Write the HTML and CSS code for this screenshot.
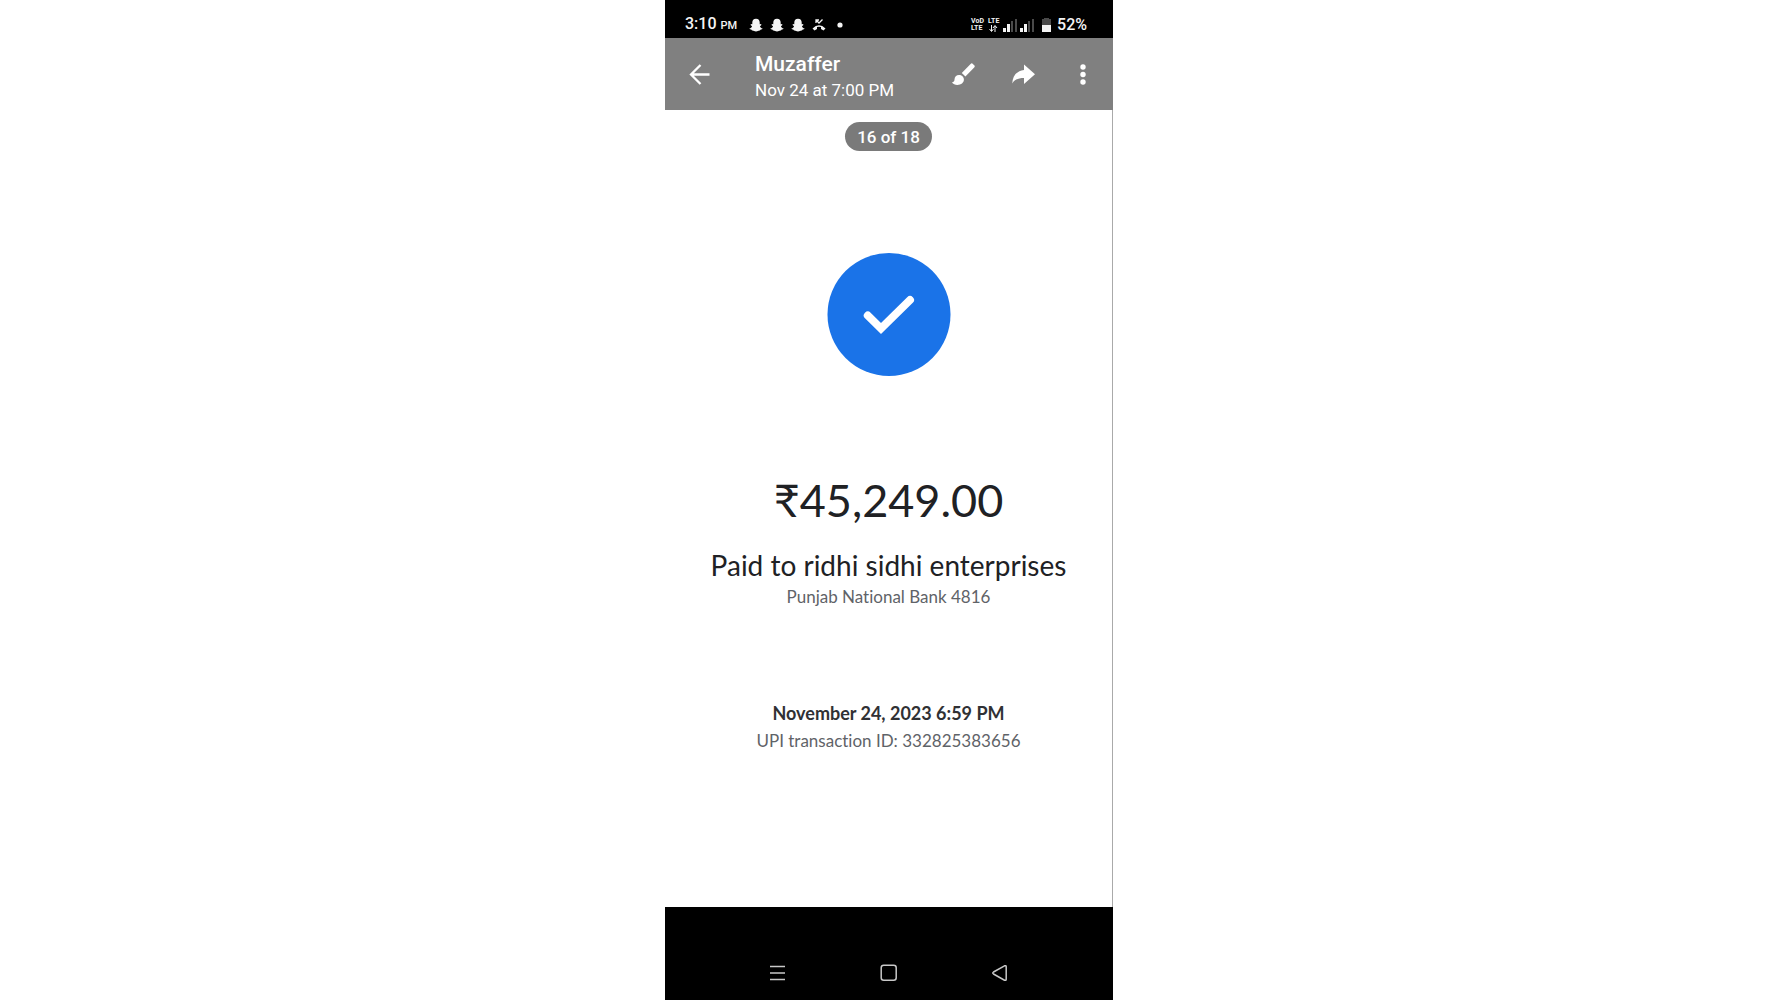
FILE: index.html
```html
<!DOCTYPE html>
<html lang="en">
<head>
<meta charset="utf-8">
<meta name="viewport" content="width=device-width, initial-scale=1">
<title>Muzaffer</title>
<link rel="stylesheet" href="styles.css">
</head>
<body>
<svg class="defs" aria-hidden="true">
  <symbol id="ghost" viewBox="0 0 14 14">
    <path d="M7 .8c2.500 0 3.700 1.600 3.700 3.800v1.600l1.600-.1-.1 1.200-1.300.9c.5 1.200 1.300 1.900 2.700 2.300-.2.900-1.100 1-2.200 1.200l-.4.900c-1.600-.3-2.200.9-4 .9s-2.400-1.200-4-.9l-.4-.9c-1.100-.2-2-.3-2.200-1.200 1.400-.4 2.200-1.100 2.700-2.300l-1.300-.9-.1-1.200 1.600.1V4.600C3.300 2.400 4.500.8 7 .8z"/>
  </symbol>
  <symbol id="signal" viewBox="0 0 14 14">
    <path d="M0 10h3v4H0zM4 6h3v8H4z"/>
    <path d="M8 3h2v11H8zM12 1h2v13h-2z" opacity=".3"/>
  </symbol>
</svg>
<main class="phone">
  <div class="status">
    <div class="status-left">
      <span class="clock">3:10 <small>PM</small></span>
      <span class="notices">
        <svg class="i14"><use href="#ghost"/></svg>
        <svg class="i14"><use href="#ghost"/></svg>
        <svg class="i14"><use href="#ghost"/></svg>
        <svg class="i14" viewBox="0 0 14 14"><path d="M.5 10.500Q7 4 13.500 10.500L11.500 12.500 9 11V9Q7 8.300 5 9v2l-2.500 1.500z"/><path d="M4 5V2h3M4 2l3 3 3.500-3.500" fill="none" stroke="currentColor" stroke-width="1.300"/></svg>
        <svg class="i14" viewBox="0 0 14 14"><circle cx="7" cy="7" r="2.600"/></svg>
      </span>
    </div>
    <div class="status-right">
      <span class="volte"><span>VoD</span><span>LTE</span></span>
      <span class="lte"><span>LTE</span><svg viewBox="0 0 10 7"><path d="M3.500 0v6M1.500 4l2 2.500 2-2.500M7 7V1M5 3l2-2.500L9 3" fill="none" stroke="currentColor"/></svg></span>
      <svg class="i14"><use href="#signal"/></svg>
      <svg class="i14"><use href="#signal"/></svg>
      <svg class="battery" viewBox="0 0 9 14"><path d="M2 0h5v1h2v6H0V1h2z" opacity=".3"/><path d="M0 7h9v7H0z"/></svg>
      <span>52%</span>
    </div>
  </div>

  <header class="bar">
    <button class="icon" type="button" aria-label="Back"><svg viewBox="0 0 24 24"><path d="M21.500 12.500H3.500M12.500 3l-9.500 9.500 9.500 9.500" fill="none" stroke="currentColor" stroke-width="2.300"/></svg></button>
    <div class="who">
      <h1>Muzaffer</h1>
      <p>Nov 24 at 7:00 PM</p>
    </div>
    <div class="actions">
      <button class="icon" type="button" aria-label="Draw"><svg viewBox="0 0 24 24"><path d="M8 13c-2.600 0-4.500 1.900-4.500 4.500 0 1.800-1 2.600-2.500 3 1.200 1.500 3 2.400 5.300 2.400 3.800 0 6.600-2.200 6.600-5.400C12.900 14.900 10.700 13 8 13zM23.200 3.200l-1.300-1.300a1.600 1.600 0 0 0-2.300 0L10.800 11.100l3.600 3.500 8.800-9.100a1.600 1.600 0 0 0 0-2.300z"/></svg></button>
      <button class="icon" type="button" aria-label="Share"><svg viewBox="0 0 24 24"><path d="M13 8V2.500l11 9.800L13 22v-6C7.200 16 3.500 17.500 1.300 21.500 1.500 14.500 5 9.200 13 8z"/></svg></button>
      <button class="icon" type="button" aria-label="More options"><svg viewBox="0 0 24 24"><circle cx="12" cy="5" r="2.700"/><circle cx="12" cy="12.500" r="2.700"/><circle cx="12" cy="20" r="2.700"/></svg></button>
    </div>
  </header>

  <section class="receipt">
    <span class="count">16 of 18</span>
    <svg class="done" viewBox="0 0 124 124" role="img" aria-label="Payment complete"><circle cx="62" cy="61.500" r="61.500"/><path d="M40.800 62.500L54 75.500l29-28.500" fill="none" stroke="#fff" stroke-width="8" stroke-linecap="round"/></svg>
    <p class="amount">₹45,249.00</p>
    <h2 class="payee">Paid to ridhi sidhi enterprises</h2>
    <p class="detail">Punjab National Bank 4816</p>
    <p class="date">November 24, 2023 6:59 PM</p>
    <p class="detail">UPI transaction ID: 332825383656</p>
  </section>

  <nav class="keys">
    <button class="key" type="button" aria-label="Recent apps"><svg viewBox="0 0 18 18"><path d="M1 2.500h15M1 9h15M1 15.500h15"/></svg></button>
    <button class="key" type="button" aria-label="Home"><svg viewBox="0 0 18 18"><rect x="1.200" y="1.200" width="15" height="15" rx="2.500"/></svg></button>
    <button class="key" type="button" aria-label="Back"><svg viewBox="0 0 18 18"><path d="M13.500 1.800L2.500 8q-1.500 1 0 2l11 6.200q1.700.6 1.700-1V2.800q0-1.600-1.700-1z"/></svg></button>
  </nav>
</main>
</body>
</html>
```
FILE: styles.css
```css
* {
  box-sizing: border-box;
}

body {
  margin: 0;
  background: #fff;
  font-family: Roboto, "Liberation Sans", sans-serif;
}

h1, h2, p {
  margin: 0;
}

svg {
  display: block;
  fill: currentColor;
}

button {
  padding: 0;
  border: 0;
  background: none;
  color: inherit;
}

.defs {
  display: none;
}

.phone {
  display: flex;
  flex-direction: column;
  max-width: 448px;
  min-height: 100vh;
  margin: 0 auto;
}

.status {
  display: flex;
  justify-content: space-between;
  padding: 12px 26px 0 20px;
  height: 38px;
  background: #000;
  color: #f4f4f4;
  font-size: 16px;
  line-height: 28px;
}

.status-left,
.status-right,
.notices {
  display: flex;
  align-items: center;
}

.status-left {
  gap: 12px;
}

.status-right {
  gap: 3px;
}

.clock,
.status-right {
  font-weight: 500;
}

.clock small {
  font-size: 11px;
}

.notices {
  gap: 7px;
}

.i14 {
  width: 14px;
  height: 14px;
}

.volte,
.lte {
  display: flex;
  flex-direction: column;
  width: 14px;
  font-size: 7px;
  font-weight: 700;
  line-height: 7px;
}

.lte {
  width: 12px;
}

.lte svg {
  width: 10px;
  height: 7px;
}

.battery {
  width: 9px;
  height: 14px;
  margin: 0 3px 0 5px;
}

.bar {
  display: flex;
  align-items: center;
  height: 72px;
  padding: 0 18px 0 23px;
  background: #808080;
  color: #fff;
}

.icon svg {
  width: 24px;
  height: 24px;
}

.who {
  flex: 1;
  margin-left: 43px;
  padding-top: 6px;
}

.who h1 {
  font-size: 21px;
  font-weight: 500;
  line-height: 26px;
}

.who p {
  font-size: 17px;
  line-height: 26px;
}

.actions {
  display: flex;
  gap: 36px;
}

.receipt {
  display: flex;
  flex: 1;
  flex-direction: column;
  align-items: center;
  padding: 12px 0;
  border-right: 1px solid #aaa;
  color: #202124;
  font-family: Lato, "Noto Sans", sans-serif;
  font-variant-ligatures: none;
  text-align: center;
}

.count {
  padding: 1px 12px 0;
  border-radius: 16px;
  background: #7a7a7a;
  color: #fff;
  font-family: Roboto, sans-serif;
  font-size: 17px;
  font-weight: 500;
  line-height: 28px;
}

.done {
  width: 124px;
  height: 124px;
  margin: 102px 0 96px;
  color: #1a73e8;
}

.amount {
  font-size: 45px;
  line-height: 54px;
}

.payee {
  margin-top: 20px;
  font-size: 28px;
  font-weight: 400;
  line-height: 36px;
}

.detail {
  color: #5f6368;
  font-size: 17px;
  line-height: 28px;
}

.date {
  margin-top: 88px;
  color: #303134;
  font-size: 18px;
  font-weight: 700;
  line-height: 28px;
}

.keys {
  display: flex;
  justify-content: center;
  gap: 93px;
  height: 93px;
  padding-top: 38px;
  background: #000;
  color: #c8c8c8;
}

.key svg {
  width: 18px;
  height: 18px;
  fill: none;
  stroke: currentColor;
  stroke-width: 1.500;
}
```
